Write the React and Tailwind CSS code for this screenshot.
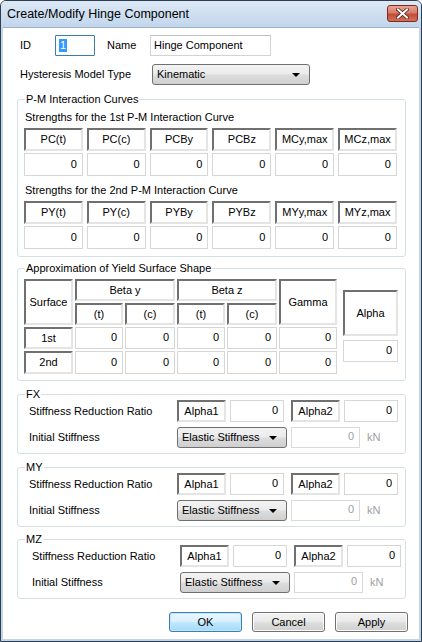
import React from 'react';

const font = "font-['Liberation_Sans',Arial,sans-serif]";

function HCell({ children, className = '' }) {
  return (
    <div className={`flex items-center justify-center bg-white border-2 border-t-[#707070] border-l-[#707070] border-r-[#e4e4e4] border-b-[#e4e4e4] text-[11px] text-black ${className}`}>
      {children}
    </div>
  );
}

function VCell({ value = '0', className = '' }) {
  return (
    <div className={`flex items-center justify-end pr-[5px] pb-[1px] bg-white border border-[#d6d6d6] text-[11px] text-black ${className}`}>
      {value}
    </div>
  );
}

function Arrow() {
  return <span className="ml-auto mr-[9px] w-0 h-0 border-l-[4px] border-r-[4px] border-t-[4px] border-l-transparent border-r-transparent border-t-black" />;
}

function Combo({ label, className = '' }) {
  return (
    <div className={`flex items-center h-[21px] rounded-[3px] border border-[#707070] bg-[linear-gradient(#f3f3f3_0%,#ebebeb_45%,#dcdcdc_55%,#cfcfcf_100%)] pl-[4px] text-[11px] text-black ${className}`}>
      {label}
      <Arrow />
    </div>
  );
}

function Group({ title, className = '', children }) {
  return (
    <div className={`relative border border-[#d5dfe5] rounded-[3px] ${className}`}>
      <span className="absolute left-[7px] top-[-8px] bg-white px-[1px] text-[11px] leading-[14px] text-black">{title}</span>
      {children}
    </div>
  );
}

function StiffGroup({ title, shift = 0, className = '' }) {
  const pl = shift ? 'pl-[14px]' : 'pl-[11px]';
  return (
    <Group title={title} className={className}>
      <div className={`${pl} pt-[5px] pb-[5px]`}>
        <div className="flex items-center h-[22px]">
          <span className="w-[148px] text-[11px]">Stiffness Reduction Ratio</span>
          <HCell className="w-[49px] h-[22px]">Alpha1</HCell>
          <VCell className="w-[54px] h-[22px] ml-[4px]" />
          <HCell className="w-[49px] h-[22px] ml-[7px]">Alpha2</HCell>
          <VCell className="w-[54px] h-[22px] ml-[4px]" />
        </div>
        <div className="flex items-center h-[21px] mt-[5px]">
          <span className="w-[148px] text-[11px]">Initial Stiffness</span>
          <Combo label="Elastic Stiffness" className="w-[110px]" />
          <div className="w-[69px] h-[21px] ml-[4px] border border-[#dadada] flex items-center justify-end pr-[5px] pb-[2px] text-[11px] text-[#a0a0a0]">0</div>
          <span className="ml-[7px] text-[11px] text-[#a0a0a0]">kN</span>
        </div>
      </div>
    </Group>
  );
}

function Btn({ children, primary }) {
  const cls = primary
    ? 'border-[#3c7fb1] bg-[linear-gradient(#eaf6fd_0%,#d9f0fc_45%,#bee6fd_55%,#a7d9f5_100%)] shadow-[inset_0_0_0_1px_#c0e6fb]'
    : 'border-[#707070] bg-[linear-gradient(#f2f2f2_0%,#ebebeb_45%,#dddddd_55%,#cfcfcf_100%)] shadow-[inset_0_0_0_1px_#fcfcfc]';
  return (
    <div className={`w-[73px] h-[20px] rounded-[3px] border flex items-center justify-center text-[11px] text-black ${cls}`}>
      {children}
    </div>
  );
}

export default function App() {
  return (
    <div className={`w-[422px] h-[642px] flex flex-col bg-[#c2d5eb] border border-[#2f3d50] rounded-t-[6px] overflow-hidden ${font}`}>
      {/* title bar */}
      <div className="h-[26px] shrink-0 flex items-center pl-[6px] bg-[linear-gradient(#dce8f5,#c2d6ec)]">
        <span className="text-[12.5px] text-black">Create/Modify Hinge Component</span>
        <div className="ml-auto mr-[3px] mb-[2px] w-[31px] h-[17px] rounded-[3px] border border-[#7d2a22] bg-[linear-gradient(#e8a493_0%,#d67c68_45%,#c24d39_55%,#d0705a_100%)] flex items-center justify-center">
          <svg width="13" height="11" viewBox="0 0 13 11">
            <path d="M2 1.5 L11 9.5 M11 1.5 L2 9.5" stroke="#5a1d16" strokeWidth="3.6" strokeLinecap="square" />
            <path d="M2 1.5 L11 9.5 M11 1.5 L2 9.5" stroke="#ffffff" strokeWidth="2" strokeLinecap="square" />
          </svg>
        </div>
      </div>

      {/* client area */}
      <div className="flex-1 mx-[2px] mb-[2px] bg-white border-t border-[#9db3cc] pl-[14px] text-black">
        {/* ID / Name */}
        <div className="flex items-center h-[21px] mt-[7px]">
          <span className="w-[38px] pl-[3px] text-[11px]">ID</span>
          <div className="w-[40px] h-[21px] border border-[#3d7bad] rounded-[1px] flex items-center pl-[3px]">
            <span className="bg-[#3399ff] text-white text-[11px] leading-[13px] px-[1px]">1</span>
          </div>
          <span className="ml-[12px] w-[43px] text-[11px]">Name</span>
          <div className="w-[121px] h-[21px] border border-[#d3d3d3] border-t-[#c0c0c0] flex items-center pl-[3px] text-[11px]">Hinge Component</div>
        </div>
        <div className="flex items-center h-[21px] mt-[8px]">
          <span className="w-[135px] pl-[3px] text-[11px]">Hysteresis Model Type</span>
          <Combo label="Kinematic" className="w-[158px]" />
        </div>

        {/* P-M Interaction Curves */}
        <Group title="P-M Interaction Curves" className="w-[389px] mt-[14px]">
          <div className="pl-[6px] pt-[10px] pb-[7px]">
            <div className="text-[11px] leading-[14px] pl-[1px]">Strengths for the 1st P-M Interaction Curve</div>
            <div className="grid grid-cols-6 gap-x-[4px] gap-y-[2px] w-[373px] mt-[4px]">
              {['PC(t)', 'PC(c)', 'PCBy', 'PCBz', 'MCy,max', 'MCz,max'].map(t => (
                <HCell key={t} className="h-[23px]">{t}</HCell>
              ))}
              {[0, 1, 2, 3, 4, 5].map(i => <VCell key={i} className="h-[23px]" />)}
            </div>
            <div className="text-[11px] leading-[14px] pl-[1px] mt-[7px]">Strengths for the 2nd P-M Interaction Curve</div>
            <div className="grid grid-cols-6 gap-x-[4px] gap-y-[2px] w-[373px] mt-[4px]">
              {['PY(t)', 'PY(c)', 'PYBy', 'PYBz', 'MYy,max', 'MYz,max'].map(t => (
                <HCell key={t} className="h-[23px]">{t}</HCell>
              ))}
              {[0, 1, 2, 3, 4, 5].map(i => <VCell key={i} className="h-[23px]" />)}
            </div>
          </div>
        </Group>

        {/* Yield surface */}
        <Group title="Approximation of Yield Surface Shape" className="w-[389px] mt-[11px]">
          <div className="flex pl-[6px] pt-[10px] pb-[6px]">
            <div className="grid grid-cols-[49px_48px_50px_48px_50px_58px] grid-rows-[22px_22px_22px_23px] gap-x-[2px] gap-y-[2px]">
              <HCell className="row-span-2">Surface</HCell>
              <HCell className="col-span-2">Beta y</HCell>
              <HCell className="col-span-2">Beta z</HCell>
              <HCell className="row-span-2">Gamma</HCell>
              <HCell>(t)</HCell>
              <HCell>(c)</HCell>
              <HCell>(t)</HCell>
              <HCell>(c)</HCell>
              <HCell>1st</HCell>
              {[0, 1, 2, 3, 4].map(i => <VCell key={i} />)}
              <HCell>2nd</HCell>
              {[0, 1, 2, 3, 4].map(i => <VCell key={i} />)}
            </div>
            <div className="flex flex-col ml-[6px] mt-[11px]">
              <HCell className="w-[55px] h-[46px]">Alpha</HCell>
              <VCell className="w-[55px] h-[22px] mt-[4px]" />
            </div>
          </div>
        </Group>

        <StiffGroup title="FX" className="w-[389px] mt-[13px]" />
        <StiffGroup title="MY" className="w-[389px] mt-[13px]" />
        <StiffGroup title="MZ" shift={1} className="w-[389px] mt-[12px]" />

        <div className="flex gap-[10px] mt-[13px] pl-[152px]">
          <Btn primary>OK</Btn>
          <Btn>Cancel</Btn>
          <Btn>Apply</Btn>
        </div>
      </div>
    </div>
  );
}
